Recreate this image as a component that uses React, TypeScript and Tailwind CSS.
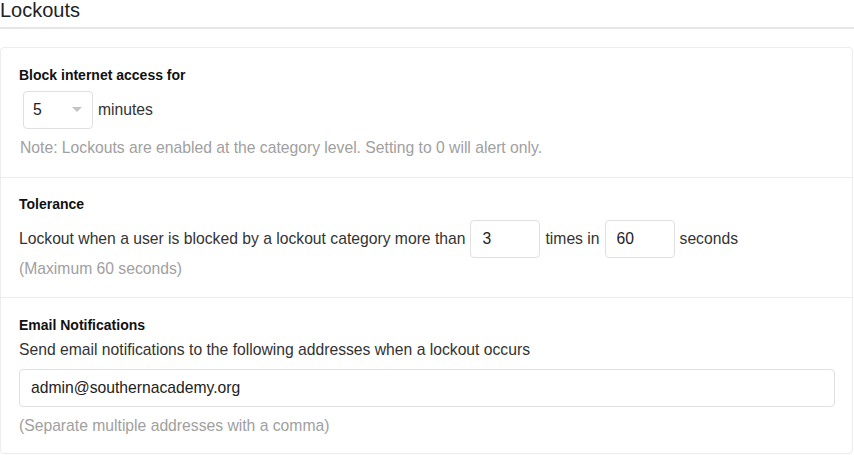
import React from "react";

export default function App() {
  const font = { fontFamily: '"Liberation Sans", Arial, sans-serif' };
  return (
    <div className="w-[854px] h-[455px] bg-white text-[15.7px] leading-[20px] text-[#333]" style={font}>
      <div className="h-[29px] border-b-2 border-[#e6e6e6] text-[20px] leading-[20px] text-[#222]">Lockouts</div>
      <div className="mt-[18px] w-[853px] border border-[#ececec] rounded-[4px]">
        <div className="pl-[18px] pr-[18px] pt-[17px] pb-[19px] border-b border-[#ececec]">
          <div className="font-bold text-[14px] text-[#111]">Block internet access for</div>
          <div className="mt-[6px] ml-[4px] flex items-center gap-[5px]">
            <div className="w-[70px] h-[38px] border border-[#e0e0e0] rounded-[4px] flex items-center pl-[9px] pr-[10px] justify-between">
              <span className="text-[#222]">5</span>
              <svg width="10" height="6" viewBox="0 0 10 6"><path d="M0 0 L10 0 L5 5 Z" fill="#c4c4c4" /></svg>
            </div>
            <span>minutes</span>
          </div>
          <div className="mt-[9px] ml-[1px] text-[#a0a0a0]">Note: Lockouts are enabled at the category level. Setting to 0 will alert only.</div>
        </div>
        <div className="pl-[18px] pr-[18px] pt-[16px] pb-[18px] border-b border-[#ececec]">
          <div className="font-bold text-[14px] text-[#111]">Tolerance</div>
          <div className="mt-[6px] flex items-center gap-[5px]">
            <span>Lockout when a user is blocked by a lockout category more than</span>
            <div className="w-[70px] h-[38px] border border-[#e0e0e0] rounded-[4px] flex items-center pl-[11px] text-[#222]">3</div>
            <span>times in</span>
            <div className="w-[70px] h-[38px] border border-[#e0e0e0] rounded-[4px] flex items-center pl-[11px] text-[#222]">60</div>
            <span>seconds</span>
          </div>
          <div className="mt-[1px] text-[#a0a0a0]">(Maximum 60 seconds)</div>
        </div>
        <div className="pl-[18px] pr-[17px] pt-[17px] pb-[17px]">
          <div className="font-bold text-[14px] text-[#111]">Email Notifications</div>
          <div className="mt-[5px]">Send email notifications to the following addresses when a lockout occurs</div>
          <div className="mt-[9px] h-[38px] border border-[#e0e0e0] rounded-[4px] flex items-center pl-[11px] text-[#222]">admin@southernacademy.org</div>
          <div className="mt-[9px] text-[#a0a0a0]">(Separate multiple addresses with a comma)</div>
        </div>
      </div>
    </div>
  );
}
